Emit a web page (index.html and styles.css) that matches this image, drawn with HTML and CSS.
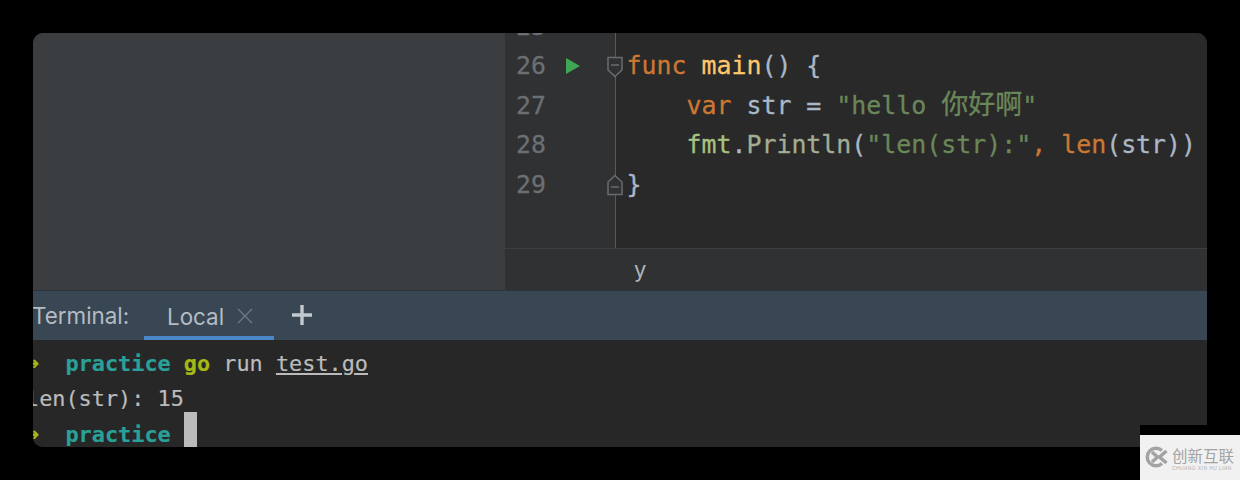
FILE: index.html
```html
<!DOCTYPE html>
<html lang="zh">
<head>
<meta charset="utf-8">
<title>Terminal</title>
<link rel="stylesheet" href="styles.css">
</head>
<body>
<div class="window">
  <div class="top">
    <aside class="side"></aside>
    <section class="main">
      <div class="editor">
        <div class="lines">
          <div class="row"><div class="gutter"><span class="num">25</span></div><div class="code"></div></div>
          <div class="row"><div class="gutter"><span class="num">26</span>
            <svg class="run" viewBox="0 0 14 16" width="14" height="16"><path d="M0 0L14 8L0 16Z"/></svg>
            <svg class="fold" viewBox="0 0 18 24" width="18" height="24"><path d="M2 2.5H16V15L9 21.5L2 15Z"/><path d="M5 10H13"/></svg></div>
            <div class="code"><span class="kw">func</span> <span class="fn">main</span>() {</div></div>
          <div class="row"><div class="gutter"><span class="num">27</span></div>
            <div class="code">    <span class="kw">var</span> str = <span class="str">"hello <span class="cjk">你好啊</span>"</span></div></div>
          <div class="row"><div class="gutter"><span class="num">28</span></div>
            <div class="code">    <span class="pkg">fmt</span>.<span class="call">Println</span>(<span class="str">"len(str):"</span><span class="kw">,</span> <span class="kw">len</span>(str))</div></div>
          <div class="row"><div class="gutter"><span class="num">29</span>
            <svg class="fold" viewBox="0 0 18 24" width="18" height="24"><path d="M2 21.5H16V9L9 2.5L2 9Z"/><path d="M5 14H13"/></svg></div>
            <div class="code">}</div></div>
          <div class="row fill"><div class="gutter"></div><div class="code"></div></div>
        </div>
      </div>
      <div class="crumb">y</div>
    </section>
  </div>
  <div class="term-head">
    <span class="term-title">Terminal:</span>
    <div class="tab">
      <span>Local</span>
      <svg class="close" viewBox="0 0 16 16" width="16" height="16"><path d="M1 1L15 15M15 1L1 15"/></svg>
    </div>
    <svg class="plus" viewBox="0 0 20 20" width="20" height="20"><path d="M10 0V20M0 10H20"/></svg>
  </div>
  <div class="term">
    <div class="tline"><span class="arrow">➜</span>  <span class="dir">practice</span> <span class="cmd">go</span> run <span class="file">test.go</span></div>
    <div class="tline">len(str): 15</div>
    <div class="tline"><span class="arrow">➜</span>  <span class="dir">practice</span> <span class="cursor"></span></div>
  </div>
</div>
<div class="mark">
  <div class="mark-box">
    <svg class="mark-logo" viewBox="0 0 26 22" width="26" height="22"><path d="M19 4.5A8.8 8.8 0 1 0 19 17.5"/><path d="M9 6L14.5 11L9 16M23.5 5L16.5 11L23.5 17"/></svg>
    <div class="mark-text">
      <div class="mark-name">创新互联</div>
      <div class="mark-sub">CHUANG XIN HU LIAN</div>
    </div>
  </div>
</div>
</body>
</html>
```
FILE: styles.css
```css
html, body {
  margin: 0;
  padding: 0;
  background: #000;
}
body {
  width: 1240px;
  height: 480px;
  overflow: hidden;
  position: relative;
}
.window {
  margin: 33px 0 0 33px;
  width: 1174px;
  height: 414px;
  border-radius: 10px 10px 0 10px;
  overflow: hidden;
  display: flex;
  flex-direction: column;
  background: #292929;
}
.top {
  height: 257px;
  display: flex;
  flex: none;
}
.side {
  width: 472px;
  background: #3b3e40;
  flex: none;
}
.main {
  flex: 1;
  display: flex;
  flex-direction: column;
  min-width: 0;
}
.editor {
  height: 215px;
  flex: none;
  overflow: hidden;
  background: #292929;
}
.lines {
  margin-top: -26px;
  display: flex;
  flex-direction: column;
  height: 241px;
}
.row {
  display: flex;
  height: 39.4px;
  flex: none;
}
.row.fill {
  flex: 1;
}
.gutter {
  width: 110px;
  flex: none;
  background: #2f3133;
  border-right: 1px solid #5a5a5a;
  display: flex;
  align-items: center;
  position: relative;
}
.num {
  margin-left: 11px;
  font: 24.8px/39.4px "DejaVu Sans Mono", monospace;
  color: #6c6f71;
  width: 30px;
  -webkit-text-stroke: 0.3px #6c6f71;
}
.run {
  fill: #3fa653;
  margin-left: 20px;
}
.fold {
  position: absolute;
  right: -9px;
  top: 8.5px;
  fill: #2f3133;
  stroke: #6a6d6f;
  stroke-width: 1.5;
}
.code {
  padding-left: 10.5px;
  font: 24.9px/39.4px "DejaVu Sans Mono", "Noto Sans CJK SC", monospace;
  color: #a9b7c6;
  white-space: pre;
  -webkit-text-stroke: 0.3px;
}
.kw { color: #cc7832; }
.fn { color: #ffc66d; }
.str { color: #6a8759; }
.pkg { color: #a7c080; }
.call { color: #a3ad93; }
.cjk {
  font-family: "Noto Sans CJK SC", sans-serif;
  font-size: 27px;
  line-height: 1;
}
.crumb {
  flex: 1;
  background: #2f3133;
  border-top: 1px solid #3d3f41;
  padding-left: 129px;
  font: 22px/40px Inter, sans-serif;
  color: #b0b4b7;
}
.term-head {
  height: 50px;
  flex: none;
  box-sizing: border-box;
  background: #394653;
  border-top: 1px solid #2b333b;
  display: flex;
  align-items: stretch;
  color: #b4bcc4;
  font: 22.4px/50px Inter, sans-serif;
  white-space: nowrap;
}
.term-title {
  width: 112px;
  flex: none;
  margin-left: -1px;
}
.tab {
  width: 130px;
  height: 50px;
  box-sizing: border-box;
  border-bottom: 5px solid #4a86c8;
  padding-left: 23px;
  display: flex;
  align-items: center;
  gap: 13px;
  flex: none;
}
.tab span {
  line-height: 49px;
  margin-top: 5px;
}
.close {
  stroke: #6f7a85;
  stroke-width: 1.3;
  fill: none;
  margin-top: 4px;
}
.plus {
  stroke: #c2c8ce;
  stroke-width: 3.4;
  margin: 14px 0 0 18px;
}
.term {
  flex: 1;
  padding-top: 6px;
  overflow: hidden;
  font: 21.85px/35.3px "DejaVu Sans Mono", monospace;
  color: #bbbbbb;
  background: #272727;
  -webkit-text-stroke: 0.2px;
}
.tline {
  margin-left: -7px;
  white-space: pre;
  height: 35.3px;
}
.arrow { color: #a4b817; font-weight: bold; }
.dir { color: #2aa198; font-weight: bold; }
.cmd { color: #a4b817; font-weight: bold; }
.file { text-decoration: underline; }
.cursor {
  display: inline-block;
  width: 13px;
  height: 36px;
  margin-top: -5px;
  background: #bbbbbb;
  vertical-align: top;
}
/* watermark pasted over the bottom-right corner */
.mark {
  position: absolute;
  left: 1140px;
  top: 425px;
  width: 100px;
  height: 55px;
  background: #000;
}
.mark-box {
  margin-top: 10px;
  height: 45px;
  background: #f1f1f1;
  display: flex;
  align-items: flex-start;
  padding: 11px 0 0 3px;
  box-sizing: border-box;
  gap: 3px;
}
.mark-logo {
  fill: none;
  stroke: #a3a3a3;
  stroke-width: 3.5;
  flex: none;
}
.mark-name {
  font: 15.5px/19px "Noto Sans CJK SC", sans-serif;
  color: #a3a3a3;
  white-space: nowrap;
}
.mark-sub {
  font: 5px/6px "Liberation Sans", sans-serif;
  letter-spacing: 0.4px;
  color: #b0b0b0;
  white-space: nowrap;
}
```
